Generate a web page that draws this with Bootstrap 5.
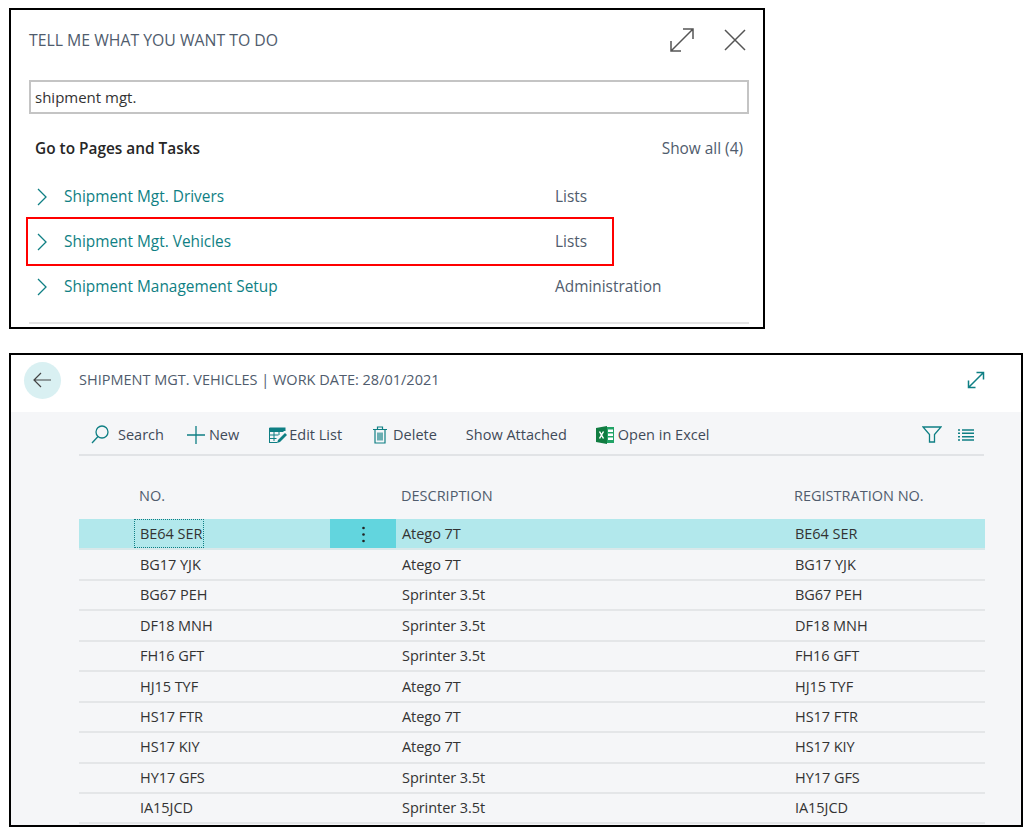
<!DOCTYPE html>
<html lang="en">
<head>
    <meta charset="UTF-8">
    <title>Shipment Mgt. Vehicles</title>
    <link href="https://cdn.jsdelivr.net/npm/bootstrap@5.3.0/dist/css/bootstrap.min.css" rel="stylesheet">
    <style>
        body { background: #fff; font-family: "Open Sans", "Liberation Sans", sans-serif; font-size: 15.4px; color: #333; padding: 8px 0 0 9px; }
        svg { display: block; flex: none; }
        .search-box { width: 756px; height: 321px; border: 2px solid #000; padding: 0 14px 0 18px; }
        .search-head { height: 60px; }
        .search-title { color: #505c6d; font-size: 15.8px; padding-top: 2px; }
        .head-icons { gap: 29px; margin-right: 3px; }
        .search-input { height: 34px; margin-top: 10px; border: 2px solid #c4c4c4; padding: 0 4px; font-size: 15px; line-height: 30px; color: #333; }
        .group-head { height: 30px; margin-top: 20px; padding: 0 6px 0 6px; }
        .group-title { font-weight: 600; color: #262626; }
        .muted-text { color: #505c6d; }
        .result-list { margin-top: 10px; padding-left: 8px; }
        .result-row { height: 45px; position: relative; }
        .result-link { color: #0f7f84; margin-left: 17px; width: 491px; }
        .red-mark { position: absolute; left: -11px; top: -2px; width: 588px; height: 49px; border: 2px solid #f00; }
        .search-rule { border-top: 2px solid #e4e4e4; margin-top: 13px; }
        .list-box { width: 1014px; height: 474px; margin-top: 24px; border: 2px solid #000; background: #f5f6f8; overflow: hidden; }
        .list-head { height: 57px; background: #fff; padding: 0 36px 7px 13px; }
        .back-btn { width: 37px; height: 37px; border-radius: 50%; background: #d9f0f2; margin-right: 18px; }
        .list-title { color: #505c6d; font-size: 14.5px; }
        .list-body { padding: 0 37px 0 68px; }
        .tool-bar { height: 44px; border-bottom: 2px solid #e1e3e6; padding: 3px 10px 0 12px; color: #3f4a58; font-size: 14.5px; }
        .search-label { margin-left: 9px; margin-right: 23px; }
        .edit-icon { margin-left: 6px; margin-right: 2px; }
        .trash-icon { margin-left: 7px; margin-right: 6px; }
        .attach-label { margin-left: 5px; margin-right: 25px; }
        .data-grid { width: 906px; table-layout: fixed; border-collapse: collapse; margin-top: 25px; }
        .data-grid th { height: 38px; font-weight: 400; color: #505c6d; font-size: 14.5px; padding: 0 0 8px 5px; }
        .data-grid td { height: 30.44px; padding: 0 0 0 6px; border-bottom: 2px solid #e4e6e8; font-size: 14.5px; letter-spacing: -.05px; color: #333; }
        .data-grid tr.picked td { background: #b2e8ec; border-bottom-color: #d8e8ea; }
        .data-grid tr.picked td.focus-cell { padding: 0; }
        .focus-mark { display: block; width: 70px; line-height: 27px; padding-left: 5px; border: 1px dotted #0f7f84; }
        .data-grid tr.picked td.menu-cell { background: #62d5de; padding: 0; text-align: center; }
        .menu-dots { display: inline-block; width: 3px; height: 17px; vertical-align: middle; }
    </style>
</head>
<body>
    <div class="search-box">
        <div class="search-head d-flex align-items-center justify-content-between">
            <span class="search-title">TELL ME WHAT YOU WANT TO DO</span>
            <div class="head-icons d-flex align-items-center">
                <svg width="26" height="26" viewBox="0 0 26 26" fill="none" stroke="#555" stroke-width="1.5"><path d="M2 24 24 2M14 2h10v10M2 14v10h10"/></svg>
                <svg width="22" height="22" viewBox="0 0 22 22" fill="none" stroke="#555" stroke-width="1.5"><path d="M1 1 21 21M21 1 1 21"/></svg>
            </div>
        </div>
        <div class="search-input">shipment mgt.</div>
        <div class="group-head d-flex align-items-center justify-content-between">
            <span class="group-title">Go to Pages and Tasks</span>
            <span class="muted-text">Show all (4)</span>
        </div>
        <div class="result-list">
            <div class="result-row d-flex align-items-center">
                <svg width="10" height="18" viewBox="0 0 10 18" fill="none" stroke="#0f7f84" stroke-width="1.3"><path d="M1 1 9 9 1 17"/></svg>
                <span class="result-link">Shipment Mgt. Drivers</span>
                <span class="muted-text">Lists</span>
            </div>
            <div class="result-row d-flex align-items-center">
                <svg width="10" height="18" viewBox="0 0 10 18" fill="none" stroke="#0f7f84" stroke-width="1.3"><path d="M1 1 9 9 1 17"/></svg>
                <span class="result-link">Shipment Mgt. Vehicles</span>
                <span class="muted-text">Lists</span>
                <div class="red-mark"></div>
            </div>
            <div class="result-row d-flex align-items-center">
                <svg width="10" height="18" viewBox="0 0 10 18" fill="none" stroke="#0f7f84" stroke-width="1.3"><path d="M1 1 9 9 1 17"/></svg>
                <span class="result-link">Shipment Management Setup</span>
                <span class="muted-text">Administration</span>
            </div>
        </div>
        <div class="search-rule"></div>
    </div>

    <div class="list-box">
        <div class="list-head d-flex align-items-center">
            <div class="back-btn d-flex align-items-center justify-content-center">
                <svg width="19" height="16" viewBox="0 0 19 16" fill="none" stroke="#444" stroke-width="1.2"><path d="M18 8H1M8 1 1 8l7 7"/></svg>
            </div>
            <span class="list-title">SHIPMENT MGT. VEHICLES | WORK DATE: 28/01/2021</span>
            <svg class="ms-auto" width="18" height="18" viewBox="0 0 18 18" fill="none" stroke="#0f7f84" stroke-width="1.5"><path d="M1.500 16.500 16.500 1.500M9.500 1.500h7v7M1.500 9.500v7h7"/></svg>
        </div>
        <div class="list-body">
            <div class="tool-bar d-flex align-items-center">
                <svg width="18" height="19" viewBox="0 0 18 19" fill="none" stroke="#0f7f84" stroke-width="1.3"><circle cx="11" cy="7" r="6"/><path d="M7 11.500 1 18"/></svg>
                <span class="search-label">Search</span>
                <svg width="18" height="18" viewBox="0 0 18 18" fill="none" stroke="#0f7f84" stroke-width="1.3"><path d="M9 0v18M0 9h18"/></svg>
                <span class="ms-1 me-4">New</span>
                <svg class="edit-icon" width="18" height="16" viewBox="0 0 18 16"><path fill="none" stroke="#0f7f84" d="M.5 4.500h14M.5 8h9M.5 11.500h7M5 1v13M10 4.500V8"/><path fill="#0f7f84" d="M.5.5h16v3.500H.5zM0 1h1v14h7v1H0z"/><path fill="#0f7f84" d="M16 6l2 2-7 7-3 1 1-3z"/></svg>
                <span class="me-4">Edit List</span>
                <svg class="trash-icon" width="14" height="18" viewBox="0 0 14 18" fill="none" stroke="#0f7f84" stroke-width="1.2"><path d="M0 3.500h14M4.500 3.500V1h5v2.500M2 3.500V17h10V3.500M5 6.500v8M7 6.500v8M9 6.500v8"/></svg>
                <span class="me-4">Delete</span>
                <span class="attach-label">Show Attached</span>
                <svg class="ms-1" width="18" height="18" viewBox="0 0 18 18"><path fill="#21a366" d="M7 1h11v16H7z"/><path fill="#fff" d="M12 3.500h5v2.500h-5zM12 7.500h5V10h-5zM12 11.500h5V14h-5z"/><path fill="#107c41" d="M0 2l11-2v18L0 16z"/><path fill="none" stroke="#fff" stroke-width="1.500" d="M3.500 5.500l4 7M7.500 5.500l-4 7"/></svg>
                <span class="ms-1">Open in Excel</span>
                <svg class="ms-auto me-3" width="20" height="17" viewBox="0 0 20 17" fill="none" stroke="#0f7f84" stroke-width="1.3"><path d="M1 1h18l-6.500 7.500V16h-5V8.500z"/></svg>
                <svg width="16" height="12" viewBox="0 0 16 12" fill="none" stroke="#0f7f84" stroke-width="1.6"><path d="M4 1h12M4 4.300h12M4 7.700h12M4 11h12M0 1h2M0 4.300h2M0 7.700h2M0 11h2"/></svg>
            </div>
            <table class="data-grid">
                <colgroup>
                    <col style="width:55px"><col style="width:196px"><col style="width:66px"><col style="width:393px"><col style="width:196px">
                </colgroup>
                <thead>
                    <tr><th></th><th>NO.</th><th></th><th>DESCRIPTION</th><th>REGISTRATION NO.</th></tr>
                </thead>
                <tbody>
                    <tr class="picked"><td></td><td class="focus-cell"><span class="focus-mark">BE64 SER</span></td>
                        <td class="menu-cell"><svg class="menu-dots" viewBox="0 0 3 17" fill="#222"><circle cx="1.500" cy="2" r="1.300"/><circle cx="1.500" cy="8.500" r="1.300"/><circle cx="1.500" cy="15" r="1.300"/></svg></td>
                        <td>Atego 7T</td><td>BE64 SER</td></tr>
                    <tr><td></td><td>BG17 YJK</td><td></td><td>Atego 7T</td><td>BG17 YJK</td></tr>
                    <tr><td></td><td>BG67 PEH</td><td></td><td>Sprinter 3.5t</td><td>BG67 PEH</td></tr>
                    <tr><td></td><td>DF18 MNH</td><td></td><td>Sprinter 3.5t</td><td>DF18 MNH</td></tr>
                    <tr><td></td><td>FH16 GFT</td><td></td><td>Sprinter 3.5t</td><td>FH16 GFT</td></tr>
                    <tr><td></td><td>HJ15 TYF</td><td></td><td>Atego 7T</td><td>HJ15 TYF</td></tr>
                    <tr><td></td><td>HS17 FTR</td><td></td><td>Atego 7T</td><td>HS17 FTR</td></tr>
                    <tr><td></td><td>HS17 KIY</td><td></td><td>Atego 7T</td><td>HS17 KIY</td></tr>
                    <tr><td></td><td>HY17 GFS</td><td></td><td>Sprinter 3.5t</td><td>HY17 GFS</td></tr>
                    <tr><td></td><td>IA15JCD</td><td></td><td>Sprinter 3.5t</td><td>IA15JCD</td></tr>
                </tbody>
            </table>
        </div>
    </div>
    <script src="https://cdn.jsdelivr.net/npm/bootstrap@5.3.0/dist/js/bootstrap.bundle.min.js"></script>
</body>
</html>
